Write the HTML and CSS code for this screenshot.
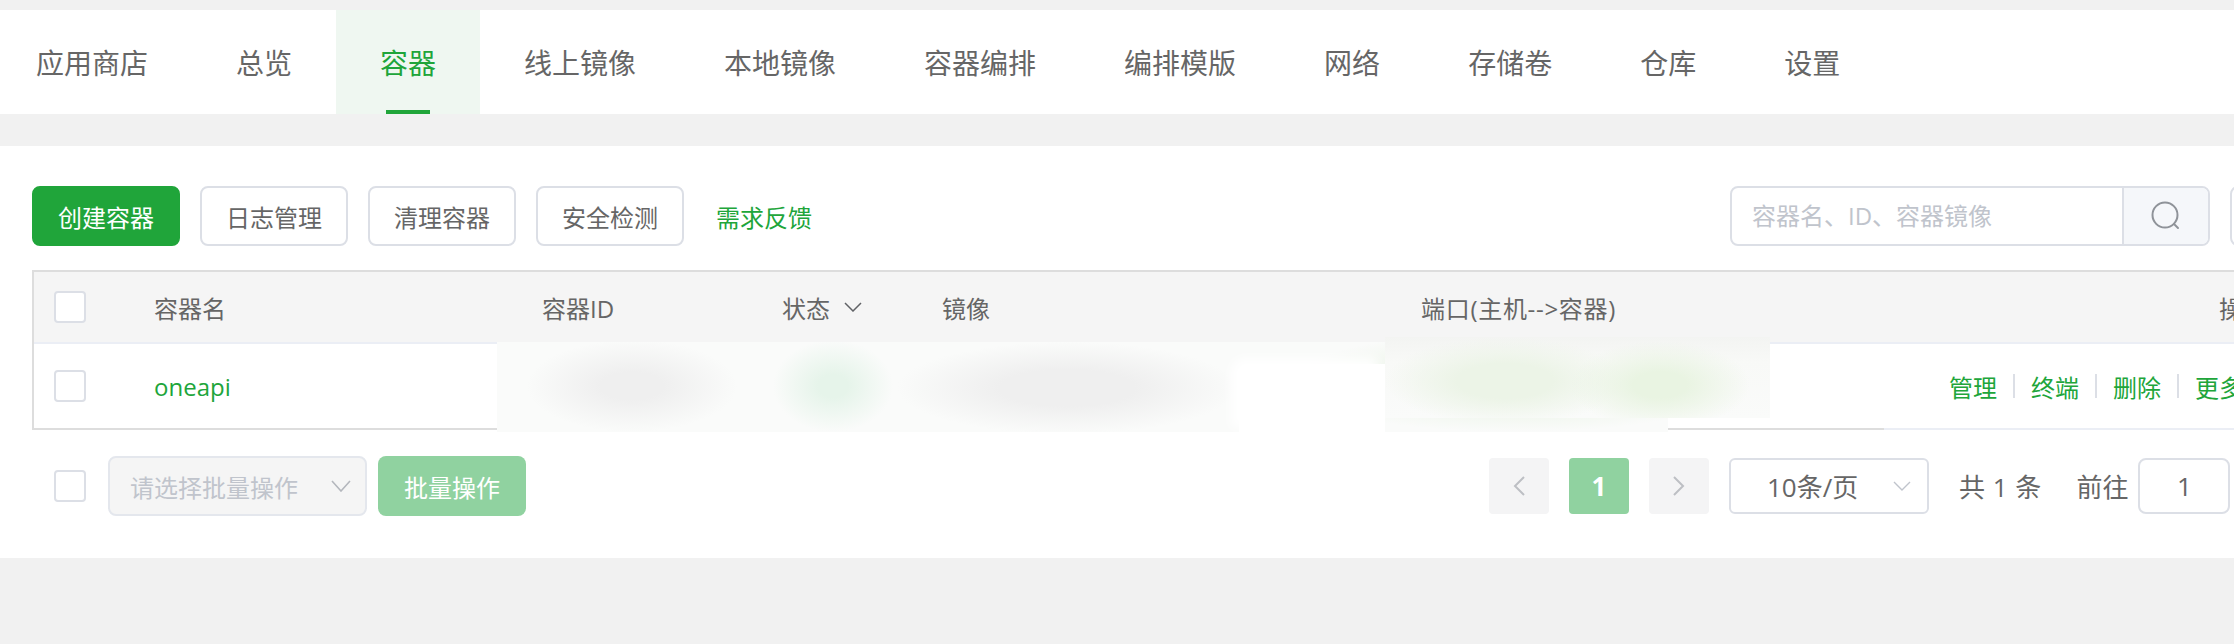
FILE: index.html
```html
<!DOCTYPE html>
<html lang="zh-CN">

<head>
    <meta charset="UTF-8">
    <meta name="viewport" content="width=device-width, initial-scale=1.0">
    <title>容器</title>
    <link rel="stylesheet" href="styles.css">
</head>

<body>
    <nav class="tabs">
        <a class="tab">应用商店</a>
        <a class="tab">总览</a>
        <a class="tab active">容器</a>
        <a class="tab">线上镜像</a>
        <a class="tab">本地镜像</a>
        <a class="tab">容器编排</a>
        <a class="tab">编排模版</a>
        <a class="tab">网络</a>
        <a class="tab">存储卷</a>
        <a class="tab">仓库</a>
        <a class="tab">设置</a>
    </nav>

    <main class="card">
        <div class="toolbar">
            <button class="btn primary">创建容器</button>
            <button class="btn">日志管理</button>
            <button class="btn">清理容器</button>
            <button class="btn">安全检测</button>
            <a class="feedback">需求反馈</a>
            <div class="search">
                <span class="search-text">容器名、ID、容器镜像</span>
                <span class="search-btn">
                    <svg width="30" height="30" viewBox="0 0 30 30" fill="none" stroke="#8f9399" stroke-width="2">
                        <circle cx="14" cy="14" r="12.5" />
                        <path d="M23 23l4 4" stroke-linecap="round" />
                    </svg>
                </span>
            </div>
            <button class="btn btn-clipped"></button>
        </div>

        <div class="table">
            <div class="row head">
                <div class="cell-check"><span class="check"></span></div>
                <div>容器名</div>
                <div>容器ID</div>
                <div class="status-head">状态
                    <svg width="18" height="10" viewBox="0 0 18 10" fill="none" stroke="#606266" stroke-width="1.5">
                        <path d="M1 1l8 8 8-8" />
                    </svg>
                </div>
                <div>镜像</div>
                <div class="port-head">端口(主机--&gt;容器)</div>
                <div class="head-action">操作</div>
            </div>
            <div class="row body">
                <div class="cell-check"><span class="check"></span></div>
                <div class="name">oneapi</div>
                <div></div>
                <div></div>
                <div></div>
                <div></div>
                <div class="actions">
                    <a>管理</a><i></i><a>终端</a><i></i><a>删除</a><i></i><a>更多</a>
                </div>
                <div class="blur blur-main"></div>
                <div class="blur-gap"></div>
                <div class="blur blur-port"></div>
            </div>
            <div class="table-end"></div>
        </div>

        <div class="footer">
            <span class="check foot-check"></span>
            <div class="batch-select">
                <span>请选择批量操作</span>
                <svg width="20" height="12" viewBox="0 0 20 12" fill="none" stroke="#b4b7bd" stroke-width="1.6">
                    <path d="M1 1l9 10 9-10" />
                </svg>
            </div>
            <button class="btn batch-btn">批量操作</button>

            <div class="pager">
                <span class="page-btn">
                    <svg width="12" height="20" viewBox="0 0 12 20" fill="none" stroke="#bdbfc4" stroke-width="2">
                        <path d="M11 1l-9 9 9 9" />
                    </svg>
                </span>
                <span class="page-btn current">1</span>
                <span class="page-btn">
                    <svg width="12" height="20" viewBox="0 0 12 20" fill="none" stroke="#bdbfc4" stroke-width="2">
                        <path d="M1 1l9 9-9 9" />
                    </svg>
                </span>
                <div class="size-select">
                    <span>10条/页</span>
                    <svg width="18" height="10" viewBox="0 0 18 10" fill="none" stroke="#c0c4cc" stroke-width="1.4">
                        <path d="M1 1l8 8 8-8" />
                    </svg>
                </div>
                <span class="total">共 1 条</span>
                <span class="goto">前往</span>
                <span class="goto-input">1</span>
            </div>
        </div>
    </main>
</body>

</html>
```

FILE: styles.css
```css
* {
    box-sizing: border-box;
}

html,
body {
    margin: 0;
    height: 644px;
    overflow: hidden;
}

body {
    padding-top: 10px;
    background-color: #f1f1f1;
    color: #666;
    font-family: "Open Sans", "Noto Sans CJK SC", sans-serif;
    font-size: 24px;
}

.tabs {
    display: flex;
    height: 104px;
    padding-left: 36px;
    background: #fff;
}

.tab {
    position: relative;
    display: flex;
    align-items: center;
    padding: 0 44px;
    color: #666;
    font-size: 28px;
}

.tab:first-child {
    margin-left: -36px;
    padding-left: 36px;
}

.tab.active {
    background: #eff7f1;
    color: #20a53a;
}

.tab.active::after {
    content: "";
    position: absolute;
    left: 50px;
    right: 50px;
    bottom: 0;
    height: 4px;
    background: #20a53a;
}

.card {
    margin-top: 32px;
    height: 412px;
    padding: 40px 0 0 32px;
    overflow: hidden;
    background: #fff;
}

.toolbar {
    display: flex;
    align-items: center;
    width: 2258px;
    height: 60px;
}

.btn {
    flex-shrink: 0;
    width: 148px;
    height: 60px;
    margin: 0 20px 0 0;
    padding: 0;
    border: 2px solid #dcdfe6;
    border-radius: 8px;
    background: #fff;
    color: #666;
    font: inherit;
}

.btn.primary {
    border-color: #20a53a;
    background: #20a53a;
    color: #fff;
}

.feedback {
    margin-left: 12px;
    color: #20a53a;
}

.search {
    display: flex;
    width: 480px;
    height: 60px;
    margin-left: auto;
    margin-right: 20px;
    border: 2px solid #dcdfe6;
    border-radius: 8px;
    overflow: hidden;
}

.search-text {
    flex: 1;
    padding-left: 20px;
    color: #c0c4cc;
    line-height: 56px;
}

.search-btn {
    display: flex;
    align-items: center;
    justify-content: center;
    width: 86px;
    border-left: 2px solid #dcdfe6;
    background: #f5f7fa;
}

.btn-clipped {
    width: 60px;
    margin-right: 0;
}

.table {
    position: relative;
    width: 2400px;
    margin-top: 24px;
    border-top: 2px solid #ddd;
    border-left: 2px solid #ddd;
}

.row {
    display: grid;
    grid-template-columns: 120px 388px 240px 160px 479px 479px 500px;
    align-items: center;
}

.head {
    height: 72px;
    border-bottom: 2px solid #ebeef5;
    background: #f5f5f5;
}

.body {
    height: 84px;
}

.cell-check {
    padding-left: 20px;
}

.check {
    display: block;
    width: 32px;
    height: 32px;
    border: 2px solid #dcdfe6;
    border-radius: 4px;
    background: #fff;
}

.status-head {
    display: flex;
    align-items: center;
    gap: 14px;
}

.port-head {
    letter-spacing: .7px;
}

.head-action {
    padding-left: 319px;
}

.name {
    color: #20a53a;
}

.actions {
    display: flex;
    align-items: center;
    padding-left: 49px;
    color: #20a53a;
}

.actions a {
    flex-shrink: 0;
}

.actions i {
    width: 2px;
    height: 24px;
    margin: 0 16px;
    background: #dcdfe6;
}

.table-end {
    height: 2px;
    background: linear-gradient(90deg, #ddd 1850px, #ebeef5 1850px);
}

/* blurred out values, they sit over the row */
.blur {
    position: absolute;
}

.blur-main {
    left: 463px;
    top: 70px;
    width: 1171px;
    height: 90px;
    background:
        radial-gradient(ellipse 105px 46px at 135px 44px, #efefef 30%, transparent 100%),
        radial-gradient(ellipse 60px 46px at 336px 44px, #e6f4ea 25%, transparent 100%),
        radial-gradient(ellipse 170px 46px at 570px 46px, #efefef 40%, transparent 100%),
        radial-gradient(ellipse 230px 50px at 1020px 40px, #ebf4e7 40%, transparent 100%),
        #fafbfa;
}

.blur-port {
    left: 1351px;
    top: 65px;
    width: 385px;
    height: 81px;
    background:
        radial-gradient(ellipse 90px 44px at 275px 48px, #e9f4e2 30%, transparent 100%),
        radial-gradient(ellipse 120px 44px at 120px 44px, #ecf4e7 40%, transparent 100%),
        linear-gradient(180deg, #f3f4f2, #f8f9f7 30%, #fafbfa);
}

.blur-gap {
    position: absolute;
    left: 1205px;
    top: 92px;
    width: 146px;
    height: 70px;
    border-radius: 14px 0 0 0;
    background: #fff;
    box-shadow: -8px -6px 12px #fff;
}

.footer {
    display: flex;
    align-items: center;
    height: 60px;
    margin-top: 26px;
    padding-left: 22px;
}

.foot-check {
    flex-shrink: 0;
}

.batch-select {
    display: flex;
    align-items: center;
    justify-content: space-between;
    flex-shrink: 0;
    width: 259px;
    height: 60px;
    margin-left: 22px;
    padding: 0 14px 0 20px;
    border: 2px solid #e4e7ed;
    border-radius: 8px;
    background: #f5f5f5;
    color: #c0c4cc;
}

.batch-btn {
    margin: 0 0 0 11px;
    border: 0;
    background: #90d2a0;
    color: #fff;
}

.pager {
    display: flex;
    align-items: center;
    flex-shrink: 0;
    margin-left: 963px;
    font-size: 26px;
}

.page-btn {
    display: flex;
    align-items: center;
    justify-content: center;
    width: 60px;
    height: 56px;
    margin-right: 20px;
    border-radius: 4px;
    background: #f4f4f5;
}

.page-btn.current {
    background: #90d2a0;
    color: #fff;
    font-weight: 700;
}

.size-select {
    display: flex;
    align-items: center;
    justify-content: space-between;
    width: 200px;
    height: 56px;
    padding: 0 16px 0 36px;
    border: 2px solid #dcdfe6;
    border-radius: 6px;
}

.total {
    margin-left: 30px;
    word-spacing: 1px;
}

.goto {
    margin-left: 35px;
}

.goto-input {
    width: 92px;
    height: 56px;
    margin-left: 10px;
    border: 2px solid #dcdfe6;
    border-radius: 8px;
    line-height: 52px;
    text-align: center;
}
```
